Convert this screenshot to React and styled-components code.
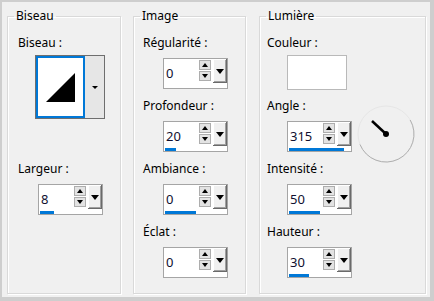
import styled, { createGlobalStyle } from "styled-components";

const GlobalStyle = createGlobalStyle`
  html, body {
    margin: 0;
    padding: 0;
  }
  body {
    font-family: "Noto Sans", "Open Sans", sans-serif;
    font-size: 12px;
    color: #000;
    background: #cecece;
  }
`;

// outer window frame
const Frame = styled.div`
  width: 434px;
  height: 301px;
  box-sizing: border-box;
  padding: 2px 4px 4px 2px;
  background: #cecece;
`;

const Panel = styled.div`
  height: 100%;
  box-sizing: border-box;
  display: flex;
  padding: 6px 4px 3px 5px;
  background: #f0f0f0;
`;

const Group = styled.fieldset`
  box-sizing: border-box;
  width: ${(p) => p.$width}px;
  margin: 0 0 0 ${(p) => p.$gap || 0}px;
  padding: 0;
  min-width: 0;
  border: 1px solid #d9d9d9;
  box-shadow: inset 1px 1px 0 #fff, 1px 1px 0 #fff;
`;

const Legend = styled.legend`
  margin-left: 6px;
  padding: 0 2px;
  line-height: 16px;
  font-size: 12px;
`;

const Body = styled.div`
  display: flex;
  flex-direction: column;
  align-items: flex-start;
  padding: 11px 0 0 ${(p) => p.$inset}px;
`;

const Label = styled.div`
  line-height: 16px;
  height: 16px;
  white-space: nowrap;
`;

const Field = styled.div`
  display: flex;
  flex-direction: column;
  align-items: flex-start;
  margin-top: ${(p) => p.$top || 0}px;
`;

/* spin box with value, up/down buttons and a drop button */
const SpinBox = styled.div`
  width: 65px;
  height: 31px;
  box-sizing: border-box;
  margin: 7px 0 0 20px;
  border: 1px solid #a5a5a5;
  background: #fff;
  display: flex;
  flex-direction: column;
`;

const SpinTop = styled.div`
  display: flex;
  height: 26px;
`;

const Value = styled.span`
  flex: 1;
  padding: 3px 0 0 2px;
  line-height: 23px;
  font-size: 13px;
  color: #101030;
`;

const Steppers = styled.div`
  width: 12px;
  display: flex;
  flex-direction: column;
  gap: 1px;
  padding-top: 1px;
  margin-right: 2px;
`;

const StepButton = styled.div`
  height: 10px;
  box-sizing: border-box;
  border: 1px solid #adadad;
  background: #e3e3e3;
  display: flex;
  align-items: center;
  justify-content: center;
`;

const UpArrow = styled.span`
  width: 0;
  height: 0;
  border-left: 3px solid transparent;
  border-right: 3px solid transparent;
  border-bottom: 4px solid #000;
`;

const DownArrow = styled(UpArrow)`
  border-bottom: 0;
  border-top: 4px solid #000;
`;

const DropButton = styled.div`
  width: 14px;
  height: 24px;
  box-sizing: border-box;
  background: #f0f0f0;
  box-shadow: inset -1px -1px 0 #6a6a6a, inset 1px 1px 0 #fff,
    inset -2px -2px 0 #a0a0a0;
  display: flex;
  justify-content: center;
  padding: 10px 1px 0 0;
`;

const DropArrow = styled.span`
  width: 0;
  height: 0;
  border-left: 4px solid transparent;
  border-right: 4px solid transparent;
  border-top: 5px solid #000;
`;

const Bar = styled.div`
  height: 3px;
  margin-left: 1px;
  width: ${(p) => p.$w}px;
  background: #0078d7;
`;

function Spin({ value, bar = 0 }) {
  return (
    <SpinBox>
      <SpinTop>
        <Value>{value}</Value>
        <Steppers>
          <StepButton>
            <UpArrow />
          </StepButton>
          <StepButton>
            <DownArrow />
          </StepButton>
        </Steppers>
        <DropButton>
          <DropArrow />
        </DropButton>
      </SpinTop>
      <Bar $w={bar} />
    </SpinBox>
  );
}

// bevel shape picker
const Combo = styled.div`
  width: 70px;
  height: 64px;
  box-sizing: border-box;
  margin: 4px 0 0 17px;
  border: 1px solid #6e6e6e;
  background: #e6e6e6;
  display: flex;
`;

const Preview = styled.div`
  width: 49px;
  box-sizing: border-box;
  border: 2px solid #0078d7;
  background: #fff;
  display: flex;
  align-items: center;
  justify-content: center;
`;

const ComboArrow = styled.div`
  flex: 1;
  display: flex;
  align-items: center;
  justify-content: center;
  &::after {
    content: "";
    border-left: 3px solid transparent;
    border-right: 3px solid transparent;
    border-top: 3px solid #000;
  }
`;

const Swatch = styled.div`
  width: 60px;
  height: 35px;
  box-sizing: border-box;
  margin: 4px 0 0 20px;
  border: 1px solid #b9b9b9;
  background: #fff;
`;

const AngleRow = styled.div`
  display: flex;
  align-items: center;
  height: 31px;
  margin-top: 7px;
  & > ${SpinBox} {
    margin-top: 0;
  }
`;

const Dial = styled.svg`
  margin: 0 0 5px 4px;
  flex: none;
`;

export default function App() {
  return (
    <Frame>
      <GlobalStyle />
      <Panel>
        <Group $width={114}>
          <Legend>Biseau</Legend>
          <Body $inset={10}>
            <Label>Biseau :</Label>
            <Combo>
              <Preview>
                <svg width="29" height="29" viewBox="0 0 29 29">
                  <polygon points="0,29 29,29 29,0" fill="#000" />
                </svg>
              </Preview>
              <ComboArrow />
            </Combo>
            <Field $top={42}>
              <Label>Largeur :</Label>
              <Spin value="8" bar={14} />
            </Field>
          </Body>
        </Group>

        <Group $width={113} $gap={12}>
          <Legend>Image</Legend>
          <Body $inset={9}>
            <Field>
              <Label>Régularité :</Label>
              <Spin value="0" />
            </Field>
            <Field $top={9}>
              <Label>Profondeur :</Label>
              <Spin value="20" bar={11} />
            </Field>
            <Field $top={9}>
              <Label>Ambiance :</Label>
              <Spin value="0" bar={31} />
            </Field>
            <Field $top={9}>
              <Label>Éclat :</Label>
              <Spin value="0" />
            </Field>
          </Body>
        </Group>

        <Group $width={167} $gap={13}>
          <Legend>Lumière</Legend>
          <Body $inset={7}>
            <Field>
              <Label>Couleur :</Label>
              <Swatch />
            </Field>
            <Field $top={8}>
              <Label>Angle :</Label>
              <AngleRow>
                <Spin value="315" bar={55} />
                <Dial width="60" height="60" viewBox="0 0 60 60">
                  <circle cx="30" cy="30" r="28" fill="none" stroke="#e6e6e6" strokeWidth="1" />
                  <path
                    d="M 54.2 16 A 28 28 0 1 1 4 40.5"
                    fill="none"
                    stroke="#b0b0b0"
                    strokeWidth="1"
                  />
                  <line x1="16" y1="17" x2="30" y2="30" stroke="#000" strokeWidth="2.5" />
                  <circle cx="30" cy="30" r="3" fill="#000" />
                </Dial>
              </AngleRow>
            </Field>
            <Field $top={9}>
              <Label>Intensité :</Label>
              <Spin value="50" bar={31} />
            </Field>
            <Field $top={9}>
              <Label>Hauteur :</Label>
              <Spin value="30" bar={20} />
            </Field>
          </Body>
        </Group>
      </Panel>
    </Frame>
  );
}
